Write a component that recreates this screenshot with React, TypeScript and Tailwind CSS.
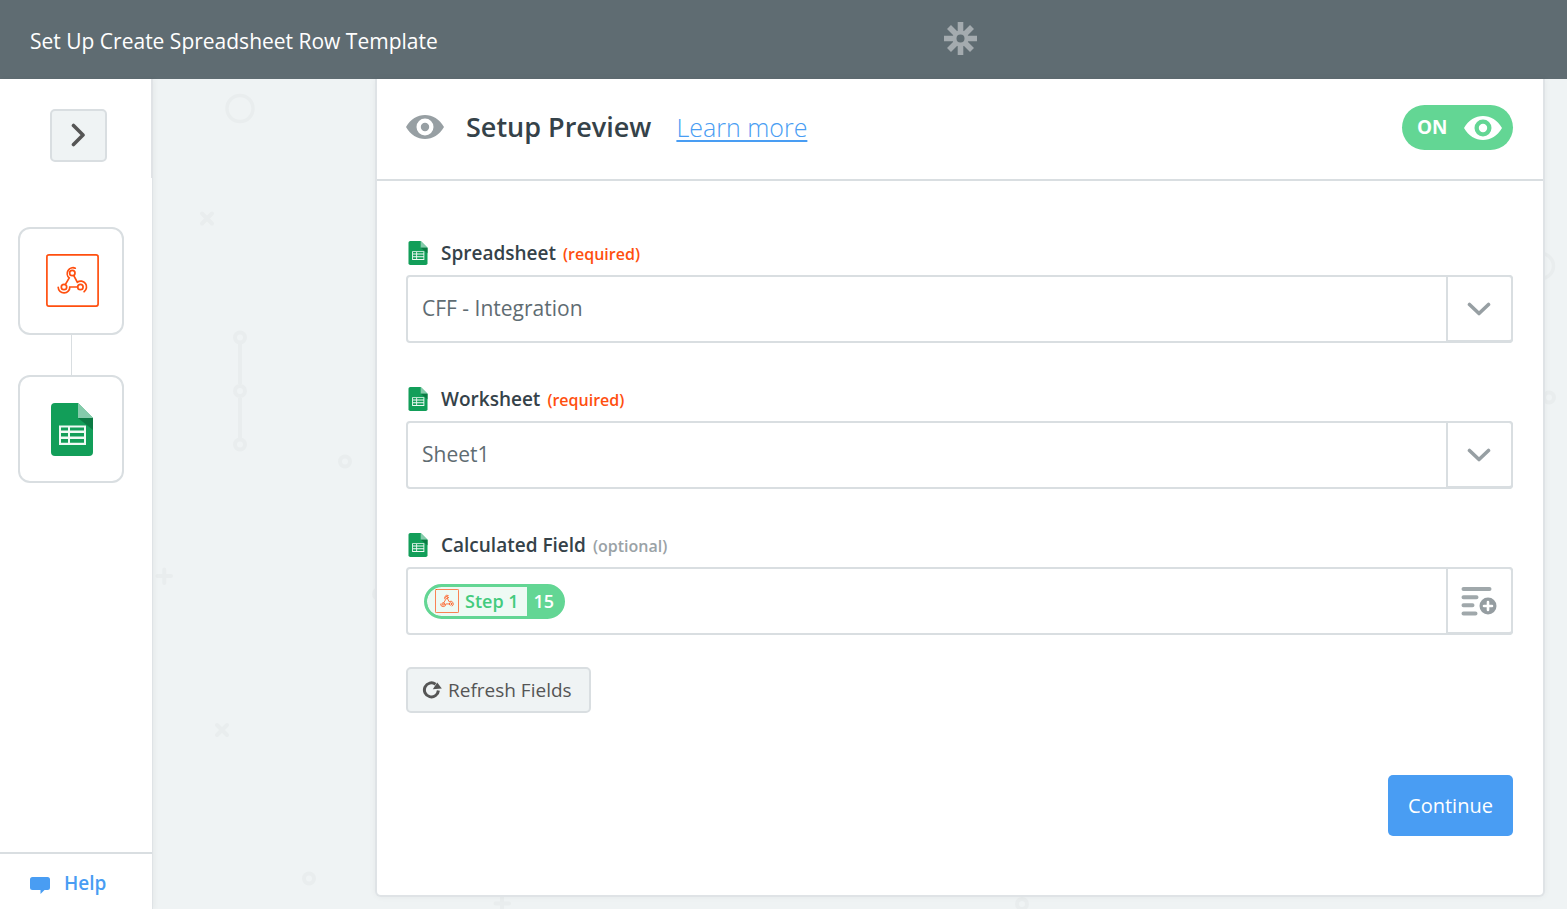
import React from "react";

type IconProps = { className?: string };

function EyeIcon({ className }: IconProps) {
  return (
    <svg viewBox="0 0 38 24" className={className} fill="currentColor" aria-hidden="true">
      <path
        fillRule="evenodd"
        d="M0 12C4.5 4 11.500 0 19 0s14.500 4 19 12c-4.500 8-11.500 12-19 12S4.500 20 0 12ZM19 3.500a8.500 8.500 0 1 0 0 17 8.500 8.500 0 0 0 0-17Zm0 4.300a4.200 4.200 0 1 1 0 8.400 4.200 4.200 0 0 1 0-8.400Z"
      />
    </svg>
  );
}

function SheetsIcon({ className }: IconProps) {
  return (
    <svg viewBox="0 0 42 53" className={className} aria-hidden="true">
      <path fill="#129e59" d="M4 0h23l15 15v34a4 4 0 0 1-4 4H4a4 4 0 0 1-4-4V4a4 4 0 0 1 4-4Z" />
      <path fill="#85cbab" d="M27 0l15 15H27Z" />
      <path fill="#0b7a43" d="M27 15h15v12Z" />
      <path
        fill="#f0faf5"
        fillRule="evenodd"
        d="M8 22.500h27V42H8Zm2 2v3h7v-3Zm9 0v3h14v-3Zm-9 5.500v3.500h7V30Zm9 0v3.500h14V30Zm-9 6v3.700h7V36Zm9 0v3.700h14V36Z"
      />
    </svg>
  );
}

function WebhookIcon({ className }: IconProps) {
  return (
    <svg viewBox="0 0 53 53" className={className} fill="none" stroke="#ff4f0f" strokeWidth="1.700" strokeLinecap="round" aria-hidden="true">
      <rect x="0.900" y="0.900" width="51.200" height="51.200" rx="2" />
      <circle cx="26.300" cy="19" r="2.700" />
      <circle cx="18" cy="33" r="2.700" />
      <circle cx="34.400" cy="33" r="2.700" />
      <path d="M29.300 14.200A5.800 5.800 0 0 0 23.200 23.900L19.600 30.200" />
      <path d="M27.800 21.700L31.300 28.200A5.800 5.800 0 0 1 38.100 37.700" />
      <path d="M31.500 33H23.800A5.800 5.800 0 0 1 12.200 33.300" />
    </svg>
  );
}

function ChevronDown({ className }: IconProps) {
  return (
    <svg viewBox="0 0 24 14" className={className} fill="none" stroke="currentColor" strokeWidth="3.600" strokeLinecap="round" strokeLinejoin="round" aria-hidden="true">
      <path d="M2.500 2.500L12 11.500L21.500 2.500" />
    </svg>
  );
}

function InsertFieldIcon({ className }: IconProps) {
  return (
    <svg viewBox="0 0 36 30" className={className} aria-hidden="true">
      <path d="M2.500 3H28.500M2.500 11.200H15.500M2.500 19.300H11.500M2.500 27.500H14.500" stroke="#a0a8ab" strokeWidth="4" strokeLinecap="round" />
      <circle cx="27" cy="20" r="8.500" fill="#959da1" />
      <path d="M27 16v8M23 20h8" stroke="#fff" strokeWidth="2.600" strokeLinecap="round" />
    </svg>
  );
}

function RefreshIcon({ className }: IconProps) {
  return (
    <svg viewBox="0 0 20 18" className={className} aria-hidden="true">
      <path d="M13.500 3.200A7 7 0 1 0 16.400 9.500" fill="none" stroke="#555" strokeWidth="3" />
      <path d="M15.200 1.600L19.800 7.600L10.800 8.300Z" fill="#555" />
    </svg>
  );
}

function Logo({ className }: IconProps) {
  return (
    <svg viewBox="0 0 33 33" className={className} fill="none" stroke="#a4abaf" strokeWidth="5.600" aria-hidden="true">
      <path d="M16.500 0V12M16.500 21V33M0 16.500H12M21 16.500H33" />
      <path d="M5 5L13 13M20 20L28 28M28 5L20 13M13 20L5 28" />
      <circle cx="16.500" cy="16.500" r="6" strokeWidth="4" />
    </svg>
  );
}

function Backdrop() {
  return (
    <svg className="pointer-events-none absolute inset-0 h-full w-full" aria-hidden="true">
      <g transform="translate(-153 -79)" fill="none" stroke="#e9edee" strokeWidth="4" strokeLinecap="round">
        <circle cx="240" cy="108.500" r="13" strokeWidth="3.500" />
        <path d="M202 213.500l10 10M212 213.500l-10 10" />
        <circle cx="240" cy="337.500" r="5" />
        <circle cx="240" cy="391" r="5" />
        <circle cx="240" cy="444.500" r="5" />
        <path d="M240 344v40M240 398v40" strokeLinecap="butt" />
        <circle cx="345" cy="461.500" r="5" />
        <path d="M157.500 576h13.500M164.300 569.500v13.500" />
        <circle cx="379" cy="594" r="5" />
        <path d="M217 725l10 10M227 725l-10 10" />
        <circle cx="309" cy="878.500" r="5" />
        <path d="M495.500 903.500h13.500M502 897v13.500" />
        <circle cx="1022" cy="904" r="5" />
        <circle cx="1541" cy="266" r="12.500" strokeWidth="3.500" />
        <circle cx="1549" cy="397.500" r="5" />
      </g>
    </svg>
  );
}

function FieldLabel({ id, name, note, required }: { id: string; name: string; note: string; required?: boolean }) {
  return (
    <label htmlFor={id} className="flex h-7 items-center text-[19px] font-semibold text-[#354249]">
      <SheetsIcon className="mr-[13px] ml-0.5 h-6 w-5" />
      <span className="flex items-baseline gap-[7px]">
        {name}
        <span className={required ? "text-[16px] text-[#ff4f0f]" : "text-[16px] text-[#9aa2a6]"}>{note}</span>
      </span>
    </label>
  );
}

const fieldBox = "relative flex h-[68px] rounded border-2 border-[#d9dee1] bg-white";
const sideCell =
  "absolute -top-0.5 -right-0.5 -bottom-0.5 flex w-[67px] items-center justify-center rounded-r border-2 border-b-[3px] border-[#d9dee1] bg-white pr-px";

function SelectField({ id, name, value }: { id: string; name: string; value: string }) {
  return (
    <div className="flex flex-col gap-2">
      <FieldLabel id={id} name={name} note="(required)" required />
      <div className={fieldBox}>
        <select id={id} className="w-full appearance-none bg-transparent pl-3.5 text-[21px] text-[#5f6c72] outline-none">
          <option>{value}</option>
        </select>
        <span className={`${sideCell} pointer-events-none text-[#979fa3]`}>
          <ChevronDown className="w-6" />
        </span>
      </div>
    </div>
  );
}

export default function App() {
  return (
    <div className="flex h-screen flex-col overflow-hidden bg-[#eff3f4] font-['Open_Sans',sans-serif]">
      <header className="flex h-[79px] shrink-0 items-center bg-[#5f6c72] pr-[22px] pl-[30px]">
        <h1 className="w-[345px] pt-1 text-[21px] whitespace-nowrap text-white">Set Up Create Spreadsheet Row Template</h1>
        <div className="flex flex-1 justify-center pb-0.5">
          <Logo className="w-[33px]" />
        </div>
      </header>

      <div className="flex min-h-0 flex-1">
        <aside className="z-10 flex w-[153px] shrink-0 flex-col border-r border-[#dfe3e6] bg-white shadow-[2px_0_5px_rgba(0,0,0,0.04)]">
          <div className="-mr-px h-[99px] border-r-2 border-[#e0e3e6] pt-[30px] pl-[50px]">
            <button aria-label="Expand steps" className="flex h-[53px] w-[57px] items-center justify-center rounded-[5px] border-2 border-[#d9dee1] bg-[#eff3f4] pr-0.5 pb-px">
              <svg viewBox="0 0 14 24" className="w-3.5" fill="none" stroke="#555" strokeWidth="3.600" strokeLinecap="round" strokeLinejoin="round" aria-hidden="true">
                <path d="M2.500 2.500L12 12L2.500 21.500" />
              </svg>
            </button>
          </div>
          <nav aria-label="Steps" className="mt-[49px] flex flex-1 flex-col items-start pl-[18px]">
            <button aria-label="Webhook step" className="flex h-[108px] w-[106px] items-center justify-center rounded-xl border-2 border-[#d9dee1] bg-white pb-0.5">
              <WebhookIcon className="ml-0.5 w-[53px]" />
            </button>
            <span className="ml-[53px] h-10 w-px bg-[#d9dee1]" />
            <button aria-label="Spreadsheet step" className="flex h-[108px] w-[106px] items-center justify-center rounded-xl border-2 border-[#d9dee1] bg-white">
              <SheetsIcon className="ml-0.5 w-[42px]" />
            </button>
          </nav>
          <a href="#help" className="flex h-[57px] items-center gap-3.5 border-t-2 border-[#d9dee1] pt-[3px] pl-[30px] text-[19px] font-semibold text-[#499df3]">
            <svg viewBox="0 0 20 17" className="mt-1 w-5" fill="currentColor" aria-hidden="true">
              <path d="M2.500 0h15A2.500 2.500 0 0 1 20 2.500v8a2.500 2.500 0 0 1-2.500 2.500H14.500L10.500 17V13H2.500A2.500 2.500 0 0 1 0 10.500v-8A2.500 2.500 0 0 1 2.500 0Z" />
            </svg>
            Help
          </a>
        </aside>

        <main className="relative flex flex-1 items-start pr-[22px] pl-[222px]">
          <Backdrop />
          <section className="relative flex-1 rounded-b-md border-2 border-t-0 border-[#dfe3e6] bg-white shadow-[0_0_6px_rgba(0,0,0,0.05)]">
            <div className="flex h-[102px] items-center border-b-2 border-[#d9dee1] pr-[30px] pb-1 pl-[29px]">
              <EyeIcon className="w-[38px] text-[#979fa3]" />
              <h2 className="ml-[22px] text-[27px] font-semibold text-[#354249]">Setup Preview</h2>
              <a href="#learn" className="ml-[25px] pt-0.5 text-[25px] font-light text-[#499df3] underline decoration-2 underline-offset-[3px]">
                Learn more
              </a>
              <button aria-pressed="true" className="ml-auto flex h-[45px] w-[111px] items-center justify-between rounded-full bg-[#63d694] pt-px pr-[11px] pl-[15px] text-[19px] font-bold text-white">
                ON
                <EyeIcon className="w-[38px]" />
              </button>
            </div>

            <form className="flex flex-col pt-[58px] pr-[30px] pb-[59px] pl-[29px]" onSubmit={(e) => e.preventDefault()}>
              <div className="flex flex-col gap-[42px]">
                <SelectField id="spreadsheet" name="Spreadsheet" value="CFF - Integration" />
                <SelectField id="worksheet" name="Worksheet" value="Sheet1" />
                <div className="flex flex-col gap-2">
                  <FieldLabel id="calculated" name="Calculated Field" note="(optional)" />
                  <div className={`${fieldBox} items-center pr-[70px] pl-4`}>
                    <span className="flex h-[35px] shrink-0 overflow-hidden rounded-full border-[3px] border-[#63d694] bg-[#63d694] text-[18px] font-semibold">
                      <span className="flex items-center gap-1.5 rounded-l-full bg-[#eefaf4] px-2 text-[#43cb7d]">
                        <WebhookIcon className="w-6" />
                        Step 1
                      </span>
                      <span className="flex items-center pr-2 pl-[7px] text-white">15</span>
                    </span>
                    <input id="calculated" type="text" className="h-full min-w-0 flex-1 bg-transparent px-2 text-[21px] text-[#5f6c72] outline-none" />
                    <button type="button" aria-label="Insert a field" className={sideCell}>
                      <InsertFieldIcon className="w-9" />
                    </button>
                  </div>
                </div>
              </div>
              <button type="button" className="mt-8 flex h-[46px] w-[185px] items-center gap-1.5 rounded-[5px] border-2 border-[#d9dee1] bg-[#eff3f4] pl-3.5 text-[19px] whitespace-nowrap text-[#555]">
                <RefreshIcon className="w-5" />
                Refresh Fields
              </button>
              <button type="submit" className="mt-[62px] h-[61px] w-[125px] self-end rounded-[5px] bg-[#499df3] text-[20px] text-white">
                Continue
              </button>
            </form>
          </section>
        </main>
      </div>
    </div>
  );
}
